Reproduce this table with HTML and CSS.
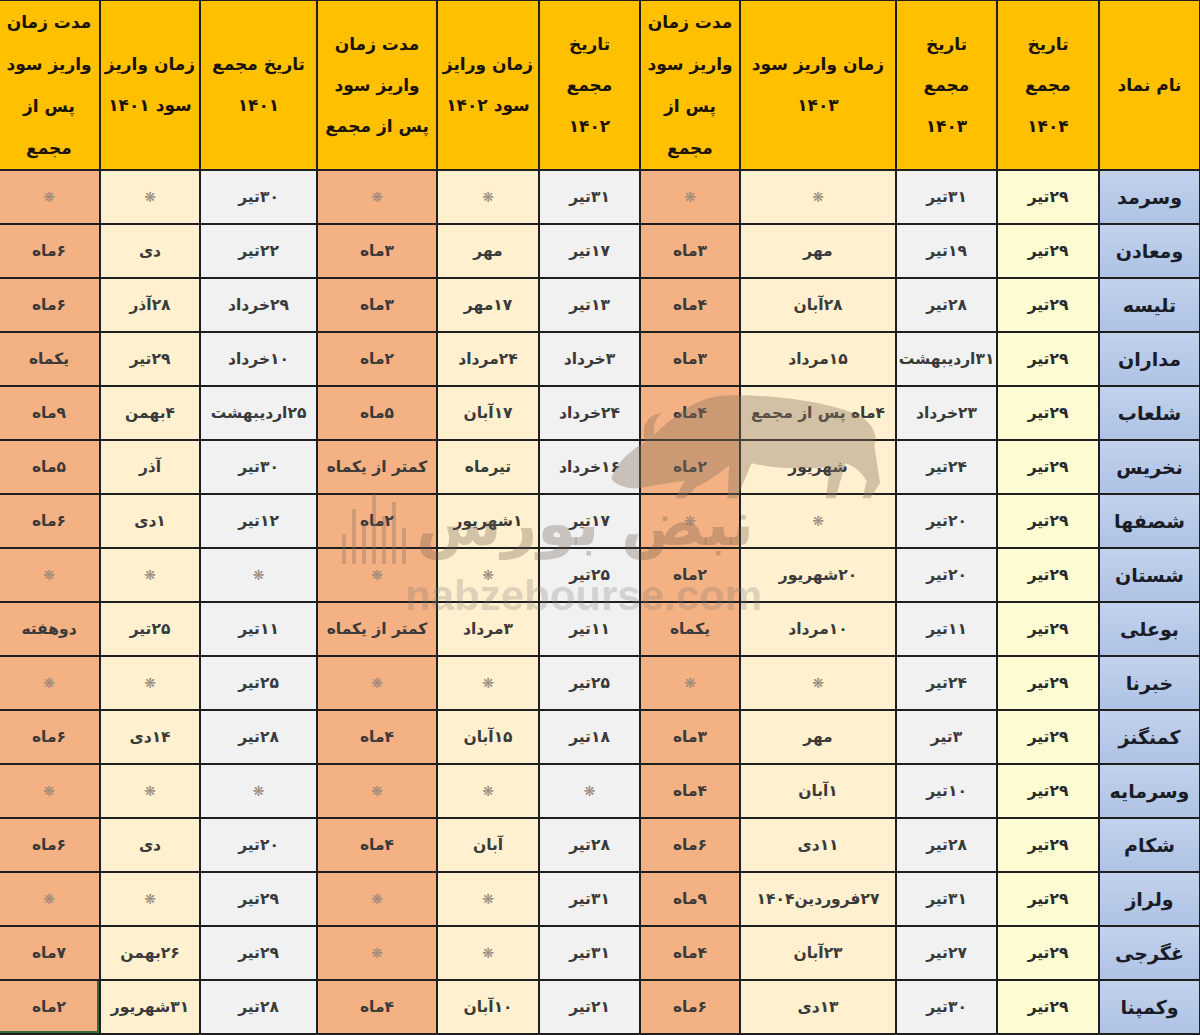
FILE: index.html
```html
<!DOCTYPE html>
<html lang="fa" dir="rtl">
<head>
<meta charset="utf-8">
<title>جدول مجامع</title>
<link rel="stylesheet" href="styles.css">
</head>
<body>
<div class="sheet">
<table class="grid">
<colgroup>
<col class="w-name"><col class="w-104"><col class="w-103"><col class="w-pay103"><col class="w-dur1">
<col class="w-102"><col class="w-pay102"><col class="w-dur2"><col class="w-101"><col class="w-pay101"><col class="w-dur3">
</colgroup>
<thead>
<tr>
<th>نام نماد</th>
<th>تاریخ<br>مجمع<br>۱۴۰۴</th>
<th>تاریخ<br>مجمع<br>۱۴۰۳</th>
<th>زمان واریز سود<br>۱۴۰۳</th>
<th class="tall">مدت زمان<br>واریز سود<br>پس از<br>مجمع</th>
<th>تاریخ<br>مجمع<br>۱۴۰۲</th>
<th>زمان ورایز<br>سود ۱۴۰۲</th>
<th>مدت زمان<br>واریز سود<br>پس از مجمع</th>
<th>تاریخ مجمع<br>۱۴۰۱</th>
<th>زمان واریز<br>سود ۱۴۰۱</th>
<th class="tall">مدت زمان<br>واریز سود<br>پس از<br>مجمع</th>
</tr>
</thead>
<tbody>
<tr><td class="name">وسرمد</td><td class="y4">۲۹تیر</td><td class="g">۳۱تیر</td><td class="c"><span class="st">❋</span></td><td class="s"><span class="st">❋</span></td><td class="g">۳۱تیر</td><td class="c"><span class="st">❋</span></td><td class="s"><span class="st">❋</span></td><td class="g">۳۰تیر</td><td class="c"><span class="st">❋</span></td><td class="s"><span class="st">❋</span></td></tr>
<tr><td class="name">ومعادن</td><td class="y4">۲۹تیر</td><td class="g">۱۹تیر</td><td class="c">مهر</td><td class="s">۳ماه</td><td class="g">۱۷تیر</td><td class="c">مهر</td><td class="s">۳ماه</td><td class="g">۲۲تیر</td><td class="c">دی</td><td class="s">۶ماه</td></tr>
<tr><td class="name">تلیسه</td><td class="y4">۲۹تیر</td><td class="g">۲۸تیر</td><td class="c">۲۸آبان</td><td class="s">۴ماه</td><td class="g">۱۳تیر</td><td class="c">۱۷مهر</td><td class="s">۳ماه</td><td class="g">۲۹خرداد</td><td class="c">۲۸آذر</td><td class="s">۶ماه</td></tr>
<tr><td class="name">مداران</td><td class="y4">۲۹تیر</td><td class="g">۳۱اردیبهشت</td><td class="c">۱۵مرداد</td><td class="s">۳ماه</td><td class="g">۳خرداد</td><td class="c">۲۴مرداد</td><td class="s">۲ماه</td><td class="g">۱۰خرداد</td><td class="c">۲۹تیر</td><td class="s">یکماه</td></tr>
<tr><td class="name">شلعاب</td><td class="y4">۲۹تیر</td><td class="g">۲۳خرداد</td><td class="c">۴ماه پس از مجمع</td><td class="s">۴ماه</td><td class="g">۲۴خرداد</td><td class="c">۱۷آبان</td><td class="s">۵ماه</td><td class="g">۲۵اردیبهشت</td><td class="c">۴بهمن</td><td class="s">۹ماه</td></tr>
<tr><td class="name">نخریس</td><td class="y4">۲۹تیر</td><td class="g">۲۴تیر</td><td class="c">شهریور</td><td class="s">۲ماه</td><td class="g">۱۶خرداد</td><td class="c">تیرماه</td><td class="s">کمتر از یکماه</td><td class="g">۳۰تیر</td><td class="c">آذر</td><td class="s">۵ماه</td></tr>
<tr><td class="name">شصفها</td><td class="y4">۲۹تیر</td><td class="g">۲۰تیر</td><td class="c"><span class="st">❋</span></td><td class="s"><span class="st">❋</span></td><td class="g">۱۷تیر</td><td class="c">۱شهریور</td><td class="s">۲ماه</td><td class="g">۱۲تیر</td><td class="c">۱دی</td><td class="s">۶ماه</td></tr>
<tr><td class="name">شستان</td><td class="y4">۲۹تیر</td><td class="g">۲۰تیر</td><td class="c">۲۰شهریور</td><td class="s">۲ماه</td><td class="g">۲۵تیر</td><td class="c"><span class="st">❋</span></td><td class="s"><span class="st">❋</span></td><td class="g"><span class="st">❋</span></td><td class="c"><span class="st">❋</span></td><td class="s"><span class="st">❋</span></td></tr>
<tr><td class="name">بوعلی</td><td class="y4">۲۹تیر</td><td class="g">۱۱تیر</td><td class="c">۱۰مرداد</td><td class="s">یکماه</td><td class="g">۱۱تیر</td><td class="c">۳مرداد</td><td class="s">کمتر از یکماه</td><td class="g">۱۱تیر</td><td class="c">۲۵تیر</td><td class="s">دوهفته</td></tr>
<tr><td class="name">خبرنا</td><td class="y4">۲۹تیر</td><td class="g">۲۴تیر</td><td class="c"><span class="st">❋</span></td><td class="s"><span class="st">❋</span></td><td class="g">۲۵تیر</td><td class="c"><span class="st">❋</span></td><td class="s"><span class="st">❋</span></td><td class="g">۲۵تیر</td><td class="c"><span class="st">❋</span></td><td class="s"><span class="st">❋</span></td></tr>
<tr><td class="name">کمنگنز</td><td class="y4">۲۹تیر</td><td class="g">۳تیر</td><td class="c">مهر</td><td class="s">۳ماه</td><td class="g">۱۸تیر</td><td class="c">۱۵آبان</td><td class="s">۴ماه</td><td class="g">۲۸تیر</td><td class="c">۱۴دی</td><td class="s">۶ماه</td></tr>
<tr><td class="name">وسرمایه</td><td class="y4">۲۹تیر</td><td class="g">۱۰تیر</td><td class="c">۱آبان</td><td class="s">۴ماه</td><td class="g"><span class="st">❋</span></td><td class="c"><span class="st">❋</span></td><td class="s"><span class="st">❋</span></td><td class="g"><span class="st">❋</span></td><td class="c"><span class="st">❋</span></td><td class="s"><span class="st">❋</span></td></tr>
<tr><td class="name">شکام</td><td class="y4">۲۹تیر</td><td class="g">۲۸تیر</td><td class="c">۱۱دی</td><td class="s">۶ماه</td><td class="g">۲۸تیر</td><td class="c">آبان</td><td class="s">۴ماه</td><td class="g">۲۰تیر</td><td class="c">دی</td><td class="s">۶ماه</td></tr>
<tr><td class="name">ولراز</td><td class="y4">۲۹تیر</td><td class="g">۳۱تیر</td><td class="c">۲۷فروردین۱۴۰۴</td><td class="s">۹ماه</td><td class="g">۳۱تیر</td><td class="c"><span class="st">❋</span></td><td class="s"><span class="st">❋</span></td><td class="g">۲۹تیر</td><td class="c"><span class="st">❋</span></td><td class="s"><span class="st">❋</span></td></tr>
<tr><td class="name">غگرجی</td><td class="y4">۲۹تیر</td><td class="g">۲۷تیر</td><td class="c">۲۳آبان</td><td class="s">۴ماه</td><td class="g">۳۱تیر</td><td class="c"><span class="st">❋</span></td><td class="s"><span class="st">❋</span></td><td class="g">۲۹تیر</td><td class="c">۲۶بهمن</td><td class="s">۷ماه</td></tr>
<tr><td class="name">وکمپنا</td><td class="y4">۲۹تیر</td><td class="g">۳۰تیر</td><td class="c">۱۳دی</td><td class="s">۶ماه</td><td class="g">۲۱تیر</td><td class="c">۱۰آبان</td><td class="s">۴ماه</td><td class="g">۲۸تیر</td><td class="c">۳۱شهریور</td><td class="s sel">۲ماه</td></tr>
</tbody>
</table>

<div class="watermark" aria-hidden="true">
<svg class="bull" viewBox="0 0 300 120" width="290" height="116">
<path d="M20 95 C25 80 40 65 60 55 C80 35 105 12 135 10 C180 8 240 15 275 30 C290 38 296 50 292 62 L298 100 L288 116 L280 116 L284 98 C278 88 270 82 262 80 L252 116 L242 116 L246 84 C220 86 190 86 165 80 L150 116 L140 116 L142 82 C130 92 118 100 108 104 L96 116 L86 116 L96 98 C80 100 60 104 45 106 C35 106 22 102 20 95 Z M55 58 C50 40 58 30 72 28 C64 36 62 46 66 54 Z" fill="#8a7660"/>
</svg>
<div class="logo">
<div class="candles"><i></i><i></i><i></i><i></i><i></i><i></i><i></i></div>
<span class="logo-text">نبض بورس</span>
</div>
<div class="domain">nabzebourse.com</div>
</div>
</div>
</body>
</html>
```
FILE: styles.css
```css
html, body {
  margin: 0;
  padding: 0;
  background: #ffffff;
}
body {
  width: 1200px;
  height: 1035px;
  overflow: hidden;
  font-family: "DejaVu Sans", "Noto Sans", sans-serif;
}
.sheet {
  position: relative;
  width: 1200px;
  height: 1035px;
  overflow: hidden;
}
.grid {
  direction: rtl;
  width: 1202px;
  margin: -1px -1px 0 0;
  table-layout: fixed;
  border-collapse: collapse;
}
.w-name { width: 101px; }
.w-104 { width: 102px; }
.w-103 { width: 101px; }
.w-pay103 { width: 156px; }
.w-dur1 { width: 100px; }
.w-102 { width: 101px; }
.w-pay102 { width: 102px; }
.w-dur2 { width: 120px; }
.w-101 { width: 117px; }
.w-pay101 { width: 100px; }
.w-dur3 { width: 102px; }

.grid th, .grid td {
  border: 2px solid #1f1f1f;
  text-align: center;
  vertical-align: middle;
  padding: 0;
  white-space: nowrap;
  overflow: hidden;
}
.grid th {
  background: #ffc000;
  height: 168px;
  font-size: 17px;
  line-height: 41px;
  font-weight: bold;
  color: #1b1406;
}
.grid th.tall { line-height: 42px; }
.grid td {
  height: 52px;
  font-size: 15.5px;
  font-weight: bold;
  color: #3a3a3a;
}
.grid td.name {
  background: linear-gradient(180deg, #c3d2ec 0%, #aec2e5 100%);
  font-size: 19px;
  color: #1a1d26;
}
.grid td.y4 { background: #fdfbd2; color: #2a2a2a; }
.grid td.g { background: #f1f1f1; }
.grid td.c { background: #fff1cf; }
.grid td.s { background: #f4b183; }
.grid td.sel { box-shadow: inset -2px 0 0 #2f6b3a, inset 0 -2px 0 #2f6b3a; }
.st {
  font-family: "DejaVu Sans", sans-serif;
  font-size: 14px;
  font-weight: normal;
  color: #9a8a7a;
}

.watermark {
  position: absolute;
  left: 330px;
  top: 372px;
  width: 560px;
  height: 260px;
  pointer-events: none;
}
.bull {
  position: absolute;
  left: 262px;
  top: 14px;
  opacity: 0.38;
}
.logo {
  position: absolute;
  left: 12px;
  top: 112px;
  direction: ltr;
  display: flex;
  align-items: flex-end;
  gap: 10px;
}
.candles {
  display: flex;
  align-items: flex-end;
  gap: 6px;
  height: 80px;
  opacity: 0.3;
}
.candles i {
  display: block;
  width: 4px;
  background: #7a6a5a;
}
.candles i:nth-child(1) { height: 30px; }
.candles i:nth-child(2) { height: 55px; }
.candles i:nth-child(3) { height: 40px; }
.candles i:nth-child(4) { height: 70px; }
.candles i:nth-child(5) { height: 48px; }
.candles i:nth-child(6) { height: 62px; }
.candles i:nth-child(7) { height: 36px; }
.logo-text {
  direction: rtl;
  font-family: "DejaVu Sans", sans-serif;
  font-weight: bold;
  font-size: 62px;
  line-height: 80px;
  color: rgba(105, 90, 75, 0.3);
}
.domain {
  position: absolute;
  left: 75px;
  top: 200px;
  direction: ltr;
  font-family: "Liberation Sans", "DejaVu Sans", sans-serif;
  font-weight: bold;
  font-size: 42px;
  line-height: 48px;
  color: rgba(120, 120, 120, 0.27);
}
```
